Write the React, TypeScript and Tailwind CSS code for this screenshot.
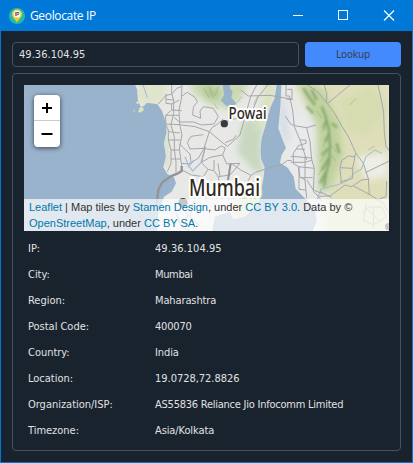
const rows: [string, string, string][] = [
  ['IP:', '49.36.104.95', 'tracking-[0.05px]'],
  ['City:', 'Mumbai', 'tracking-[-0.35px]'],
  ['Region:', 'Maharashtra', 'tracking-[-0.12px]'],
  ['Postal Code:', '400070', 'tracking-[-0.2px]'],
  ['Country:', 'India', 'tracking-[-0.1px]'],
  ['Location:', '19.0728,72.8826', 'tracking-[-0.03px]'],
  ['Organization/ISP:', 'AS55836 Reliance Jio Infocomm Limited', 'tracking-[-0.24px]'],
  ['Timezone:', 'Asia/Kolkata', 'tracking-[-0.1px]'],
];

function Terrain() {
  return (
    <svg width="365" height="146" viewBox="0 0 365 146" className="block">
      <defs>
        <filter id="soft" x="-30%" y="-30%" width="160%" height="160%">
          <feGaussianBlur stdDeviation="10" />
        </filter>
        <filter id="ridge" x="-30%" y="-30%" width="160%" height="160%">
          <feGaussianBlur stdDeviation="3" />
        </filter>
        <clipPath id="land">
          <path d="M-20 0L-8 30L-6 60L2 80L12 78L20 68L35 70L52 72L66 92L77 125L80 155L72 190L78 230L70 262L82 282L102 292L108 310L95 335L72 350L55 400L50 460L800 460V0Z" />
        </clipPath>
      </defs>
      <rect width="365" height="146" fill="#99b3cc" />
      <g transform="translate(116 -5) scale(.33333)">
        <g clipPath="url(#land)">
          <rect x="-40" width="860" height="470" fill="#e8e9e7" />
          <g filter="url(#soft)">
            <path d="M-20 0L90 0L70 60L30 85L-10 60Z" fill="#dfe4cc" />
            <path d="M40 70L78 120L85 270L65 240L60 150Z" fill="#d2dfbe" />
            <path d="M145 0L330 0L310 45L270 90L210 75L160 40Z" fill="#cbd9b2" />
            <path d="M185 10L240 30L235 60L200 55Z" fill="#afc893" />
            <path d="M310 120L375 110L362 200L370 285L345 275L290 215Z" fill="#c8d8c0" />
            <path d="M375 0L415 0L390 130L345 150Z" fill="#dbe2c6" />
            <path d="M455 0L750 0L750 460L550 460L570 330L545 250L530 130Z" fill="#dedfba" />
            <path d="M600 60L690 20L750 80L680 170L620 150Z" fill="#d7dcb0" />
            <path d="M470 0L550 30L600 130L610 230L570 330L535 340L530 140Z" fill="#bfd29e" />
            <path d="M430 90L515 130L500 350L460 320L450 230Z" fill="#e9eaeb" />
            <path d="M420 30L440 90L450 180L430 190L415 120Z" fill="#d4dfe6" />
            <path d="M650 230L740 220L740 290L680 300Z" fill="#edeee6" />
            <path d="M345 310L370 300L370 370L320 400L280 430L290 370Z" fill="#d5e0b4" />
          </g>
          <g filter="url(#ridge)" fill="none" stroke="#759960" strokeWidth="7" opacity=".75">
            <path d="M490 25L510 55L525 75M515 30L530 60M500 80L520 100M545 80L557 110L566 145L570 195L568 245L558 280L552 320" />
            <path d="M560 120L550 145M568 160L555 185M566 205L545 225M566 235L546 270M558 275L540 310M590 190L598 220M575 130L592 142" />
          </g>
          <g fill="none" stroke="#87a770" strokeWidth="3" opacity=".45">
            <path d="M190 25l18 28M207 18l13 34M235 20l-10 28M222 70l12 18M548 200l14-22M540 245l20-25M535 285l20-30M572 195l18 22M574 225l14 18M545 155l15-14M530 92l15 22" />
            <path d="M290 70l15-20M340 75l14-30M630 75l18-20M684 210l20-12" />
          </g>
          <path d="M247 0L252 45L243 62L260 79L282 85L288 68L274 53L278 35L270 25V0Z" fill="#99b3cc" />
          <path d="M412 0L425 0L421 80L415 145L428 180L438 204L425 225L420 248L443 263L461 290L467 326L490 350L525 385L530 425L515 460L215 460L225 410L270 395L280 418L315 410L350 375L367 345L366 320L371 290L374 262L363 235L362 205L365 175L377 135L390 85L404 55Z" fill="#99b3cc" />
          <path d="M0 0l13 25 9 28M725 220l-20-10-27 20-14 38-20 10-23 25-30 12-48 12-13 35" fill="none" stroke="#a0b9d1" strokeWidth="3" />
          <path d="M135 230l10 25 13 18 25-25 13-48M144 262l17-20" fill="none" stroke="#a7c0dc" strokeWidth="4" />
        </g>
        <g fill="none" stroke="#a7a6aa" strokeWidth="3" strokeLinejoin="round">
          <path d="M78 42V70L95 72V90L77 106V134L85 150V180L93 210V250L82 275M95 15V40L101 60L101 100L93 135L103 170V210L108 245L108 278M126 15L124 58L117 90L119 132L126 165L118 205L125 258" />
          <path d="M77 106H116M77 132L118 134M95 90L125 92M85 155L120 159M85 180H122M93 210H119M93 237H121M55 72L78 46L95 43L110 25L125 20M95 72L118 60M101 60L78 58" />
          <path d="M126 48L142 37L165 52L172 65L160 82L158 105L182 115L180 93L190 80L220 85L235 110L222 132L185 135L160 126L118 126L102 112" />
          <path d="M118 134L165 140L208 155L250 190L262 199M208 155L217 142L233 132L250 117M208 155L192 205L150 207L142 188L153 169L190 164M192 205L175 235L158 245L145 252L126 250M118 192L150 222L153 245" />
          <path d="M185 205L225 210L244 198L256 204L248 225L210 232L184 247L204 268L222 272L234 289L240 315M204 268L190 290L155 285L126 270M248 225L260 252L300 250L270 285L235 290M222 240L222 270M234 250L240 289M185 247L196 200" />
          <path d="M350 15L332 50L315 110L300 165L262 200M383 15L355 50L340 85L323 112M302 30L325 48L390 46L458 58M253 125L310 110M255 188L280 178L288 166M274 250L302 270L333 286L347 277L390 262L423 255L443 241L455 242M333 286L318 315" />
          <path d="M438 15V48H448L458 90L463 140L480 180L500 240M442 28H456V58H440M461 137L450 130L436 108M463 137L500 143L528 135M500 143L510 185L515 238L523 265L520 335" />
          <path d="M480 180H498V190L475 197L460 220V250L475 260L480 290L495 300L500 355M470 207L495 208M452 229L516 234M452 247H495L517 240M475 260L523 265M480 293H518M477 328L498 330M477 260V328M495 230V300" />
          <path d="M502 15L530 32L562 71L584 100L605 138L625 170L648 220L670 250L685 296L688 345M562 71L629 16M560 68V40L553 15M625 228L645 230L638 265L600 263L605 242L625 228M638 265V295L600 306M600 265L604 308M520 335L535 349L570 348L615 315L635 320L665 300L688 297M640 318L690 344L730 370L750 405M648 220L642 233M676 278L750 242" />
          <path d="M714 15L725 65L731 98L733 160L738 200L750 215M740 303L738 350L710 360M500 300L520 330L545 340M535 349L544 363M540 335L575 352" />
          <path d="M110 400L123 440L150 453M118 375L145 405L132 435M162 360L150 410L182 440M665 400L690 380L725 382L740 410L700 435L670 420L680 370M685 390L720 425M700 380V445" />
        </g>
        <g fill="none" stroke="#939396" strokeLinejoin="round">
          <path d="M125 258V273L112 281L92 289L66 308L55 330L50 370" strokeWidth="7" />
          <path d="M272 250L264 300" strokeWidth="6" />
        </g>
        <g fill="#dce6bb">
          <circle cx="4" cy="88" r="7" /><circle cx="-7" cy="68" r="4" /><circle cx="-17" cy="93" r="2" /><circle cx="-1" cy="94" r="4" />
        </g>
        <circle cx="129" cy="368" r="14" fill="#444" />
        <circle cx="746" cy="440" r="11" fill="#444" />
        <circle cx="253" cy="131" r="11" fill="#393a3d" />
      </g>
      <g fill="#302922" stroke="#fff" strokeLinejoin="round" paintOrder="stroke" fontFamily="'Noto Sans', sans-serif">
        <text x="204.5" y="34" fontSize="16" strokeWidth="4" textLength="38" lengthAdjust="spacingAndGlyphs" fontWeight="500">Powai</text>
        <text x="165" y="111" fontSize="24" strokeWidth="5" textLength="71" lengthAdjust="spacingAndGlyphs" fontWeight="500">Mumbai</text>
      </g>
    </svg>
  );
}

function MapView() {
  return (
    <div className="relative h-[146px] w-[365px] overflow-hidden">
      <Terrain />
      <div className="absolute top-[10px] left-[10px] flex w-[26px] flex-col rounded-[4px] bg-white text-black shadow-[0_1px_5px_rgba(0,0,0,0.65)]">
        <button className="flex h-[26px] items-center justify-center border-b border-[#ccc]">
          <svg width="12" height="12" viewBox="0 0 12 12"><path d="M1 6H11M6 1V11" stroke="currentColor" strokeWidth="2" /></svg>
        </button>
        <button className="flex h-[26px] items-center justify-center">
          <svg width="12" height="12" viewBox="0 0 12 12"><path d="M.5 6H11.500" stroke="currentColor" strokeWidth="2" /></svg>
        </button>
      </div>
      <div className="absolute inset-x-0 bottom-0 h-8 bg-white/70 pl-[5px] font-['Liberation_Sans',Arial,sans-serif] text-[11px] leading-4 whitespace-nowrap text-[#333]">
        <div><a className="text-[#0078a8]">Leaflet</a> | Map tiles by <a className="text-[#0078a8]">Stamen Design</a>, under <a className="text-[#0078a8]">CC BY 3.0</a>. Data by ©</div>
        <div><a className="text-[#0078a8]">OpenStreetMap</a>, under <a className="text-[#0078a8]">CC BY SA</a>.</div>
      </div>
    </div>
  );
}

function AppIcon() {
  return (
    <svg width="16" height="16" viewBox="0 0 16 16">
      <circle cx="8" cy="8" r="8" fill="#20bda9" />
      <path d="M8 14.5C6.5 11.6 3 9.2 3 6.200a5 5 0 0 1 10 0C13 9.2 9.5 11.6 8 14.5Z" fill="#f5c62e" />
      <circle cx="8" cy="6" r="3.5" fill="#fff" />
      <text x="8" y="7.8" textAnchor="middle" fontSize="5" fontWeight="700" fill="#444" fontFamily="'Liberation Sans', sans-serif">IP</text>
    </svg>
  );
}

export default function App() {
  return (
    <div className="flex h-[463px] w-[413px] flex-col border border-[#0078d7] bg-[#19232d] font-['DejaVu_Sans_Condensed','DejaVu_Sans',sans-serif] text-[11px] text-[#e0e1e3]">
      <header className="flex h-[30px] shrink-0 items-center bg-[#0078d7] pl-2 text-white">
        <AppIcon />
        <h1 className="ml-[5px] flex-1 font-['Open_Sans',sans-serif] text-[12px] tracking-[-0.35px]">Geolocate IP</h1>
        <svg width="127" height="30" viewBox="0 0 127 30" fill="none" stroke="currentColor">
          <path d="M8 14.5H18" />
          <rect x="53.5" y="9.5" width="9" height="9" />
          <path d="M99 9.500L109 19.500M109 9.500L99 19.500" strokeWidth="1.1" />
        </svg>
      </header>
      <main className="flex flex-1 flex-col px-[11px] pt-[11px] pb-[11px]">
        <div className="flex h-[25px] gap-[6px]">
          <div className="flex w-[287px] items-center rounded-[4px] border border-[#455364] px-[6px] pt-[2px] tracking-[0.03px]">49.36.104.95</div>
          <button className="w-[96px] rounded-[4px] bg-[#448aff] pt-[2px] tracking-[-0.2px] text-[#38424d]">Lookup</button>
        </div>
        <section className="mt-[6px] flex-1 rounded-[4px] border border-[#455364] px-[11px] pt-[11px]">
          <MapView />
          <dl className="mt-[5px] ml-1">
            {rows.map(([label, value, tracking]) => (
              <div key={label} className="flex h-[26px] items-center whitespace-nowrap">
                <dt className="w-[127px] tracking-[-0.02px]">{label}</dt>
                <dd className={tracking}>{value}</dd>
              </div>
            ))}
          </dl>
        </section>
      </main>
    </div>
  );
}
